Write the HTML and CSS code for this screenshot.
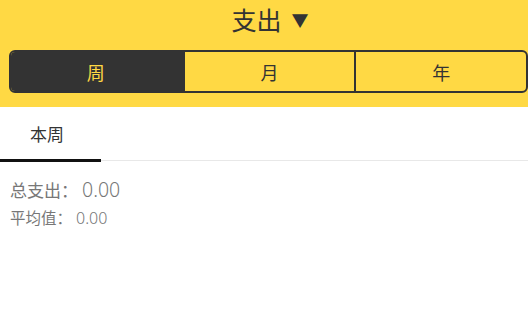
FILE: index.html
```html
<!DOCTYPE html>
<html lang="zh">
<head>
<meta charset="utf-8">
<link rel="stylesheet" href="styles.css">
</head>
<body>
<div class="header">
  <div class="title">支出<span class="caret">▼</span></div>
  <div class="seg">
    <div class="seg-item active">周</div>
    <div class="seg-item">月</div>
    <div class="seg-item">年</div>
  </div>
</div>
<div class="tabs">
  <div class="tab active">本周</div>
</div>
<div class="stats">
  <div class="row total">总支出：<span class="num">0.00</span></div>
  <div class="row avg">平均值：<span class="num">0.00</span></div>
</div>
</body>
</html>
```
FILE: styles.css
```css
* { box-sizing: border-box; }
html, body { margin: 0; padding: 0; }
body {
  width: 528px;
  height: 333px;
  background: #fff;
  font-family: "Noto Sans CJK SC", "Noto Sans", sans-serif;
  color: #333;
  overflow: hidden;
}
.header {
  background: #ffd944;
  height: 107px;
  padding-top: 2px;
}
.title {
  height: 38px;
  line-height: 34px;
  text-align: center;
  font-size: 25px;
  color: #333;
  padding-left: 12px;
}
.caret {
  font-size: 17px;
  margin-left: 10px;
  position: relative;
  top: -3px;
}
.seg {
  display: flex;
  margin: 10px 0 0 9px;
  width: 519px;
  height: 43px;
  border: 2px solid #333;
  border-radius: 6px;
  overflow: hidden;
}
.seg-item {
  flex: 1;
  display: flex;
  align-items: center;
  justify-content: center;
  font-size: 18px;
  color: #333;
  border-left: 2px solid #333;
}
.seg-item:first-child { border-left: none; }
.seg-item.active {
  background: #333;
  color: #ffd944;
  padding-right: 2px;
}
.tabs {
  display: flex;
  height: 54px;
  border-bottom: 1px solid #e8e8e8;
}
.tab {
  width: 101px;
  padding-left: 30px;
  font-size: 17px;
  line-height: 54px;
  color: #333;
}
.tab.active {
  border-bottom: 3px solid #111;
  height: 55px;
  line-height: 54px;
  margin-bottom: -2px;
}
.stats {
  padding: 16px 10px 0;
  color: #777;
}
.row { white-space: nowrap; }
.total {
  font-size: 17px;
  line-height: 26px;
}
.total .num {
  font-family: "Noto Sans", sans-serif;
  font-weight: 300;
  font-size: 19.5px;
  margin-left: 4px;
}
.avg {
  margin-top: 3px;
  font-size: 15.5px;
  line-height: 22px;
}
.avg .num {
  font-family: "Noto Sans", sans-serif;
  font-weight: 300;
  font-size: 16px;
  margin-left: 4px;
}
```
